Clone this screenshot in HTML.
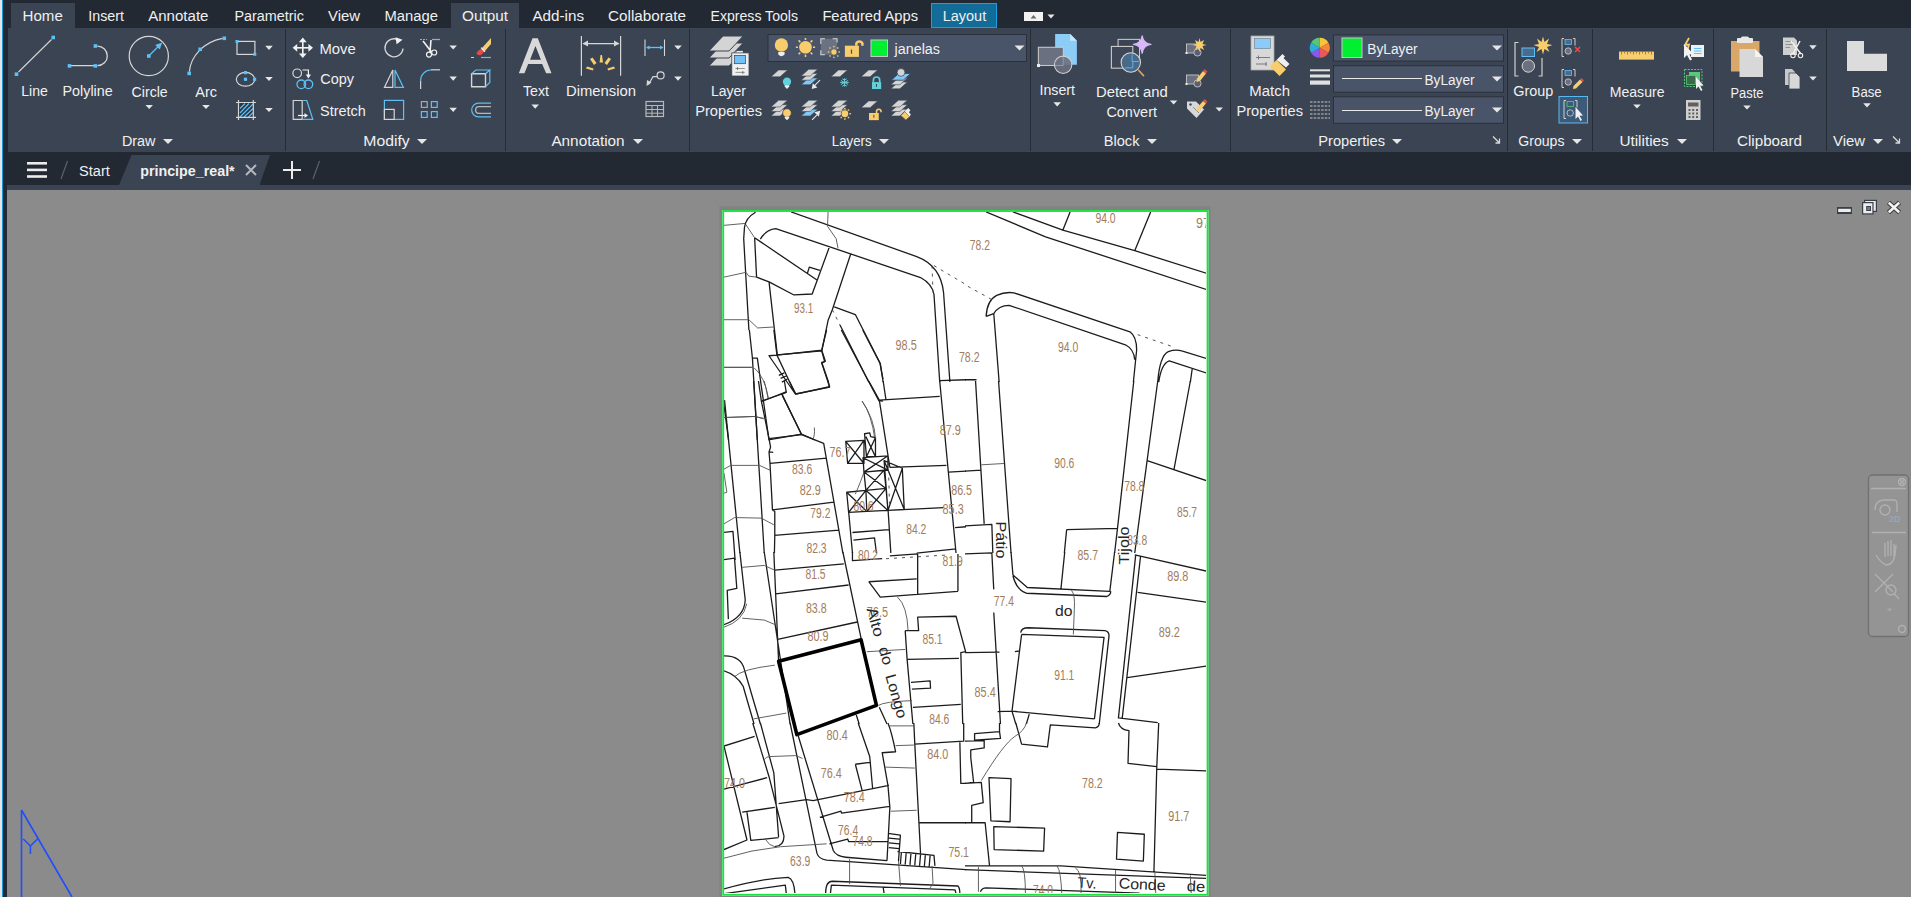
<!DOCTYPE html>
<html><head><meta charset="utf-8"><style>
html,body{margin:0;padding:0;width:1911px;height:897px;overflow:hidden;background:#222933;}
svg{position:absolute;left:0;top:0;display:block;font-family:"Liberation Sans",sans-serif;}
</style></head><body>
<svg width="1911" height="897" viewBox="0 0 1911 897">
<rect x="0" y="0" width="1911" height="897" fill="#222933"/>
<rect x="8" y="28" width="1903" height="124" fill="#3b4453"/>
<rect x="11" y="3" width="64" height="25" fill="#3b4453"/>
<rect x="451" y="3" width="68" height="25" fill="#3b4453"/>
<rect x="931.5" y="3.5" width="65" height="24" fill="#136b98" stroke="#18a0e0" stroke-width="1"/>
<rect x="285" y="29" width="1" height="122" fill="#262c36"/>
<rect x="505" y="29" width="1" height="122" fill="#262c36"/>
<rect x="689" y="29" width="1" height="122" fill="#262c36"/>
<rect x="1030" y="29" width="1" height="122" fill="#262c36"/>
<rect x="1230" y="29" width="1" height="122" fill="#262c36"/>
<rect x="1507" y="29" width="1" height="122" fill="#262c36"/>
<rect x="1592" y="29" width="1" height="122" fill="#262c36"/>
<rect x="1713" y="29" width="1" height="122" fill="#262c36"/>
<rect x="1826" y="29" width="1" height="122" fill="#262c36"/>
<rect x="7" y="185" width="1904" height="5" fill="#3b4453"/>
<rect x="7" y="190" width="1904" height="707" fill="#8b8b8b"/>
<rect x="0" y="0" width="2" height="897" fill="#e6e4e4"/>
<rect x="2" y="0" width="1" height="897" fill="#1597d6"/>
<rect x="3" y="0" width="1" height="897" fill="#2a2428"/>
<text x="22.6" y="21.3" font-size="15.5" font-weight="normal" fill="#f0f0f0" textLength="40.2" lengthAdjust="spacingAndGlyphs">Home</text>
<text x="88.3" y="21.3" font-size="15.5" font-weight="normal" fill="#f0f0f0" textLength="35.7" lengthAdjust="spacingAndGlyphs">Insert</text>
<text x="148.2" y="21.3" font-size="15.5" font-weight="normal" fill="#f0f0f0" textLength="60.3" lengthAdjust="spacingAndGlyphs">Annotate</text>
<text x="234.5" y="21.3" font-size="15.5" font-weight="normal" fill="#f0f0f0" textLength="69.5" lengthAdjust="spacingAndGlyphs">Parametric</text>
<text x="328.0" y="21.3" font-size="15.5" font-weight="normal" fill="#f0f0f0" textLength="32.0" lengthAdjust="spacingAndGlyphs">View</text>
<text x="384.5" y="21.3" font-size="15.5" font-weight="normal" fill="#f0f0f0" textLength="53.5" lengthAdjust="spacingAndGlyphs">Manage</text>
<text x="462.0" y="21.3" font-size="15.5" font-weight="normal" fill="#f0f0f0" textLength="46.0" lengthAdjust="spacingAndGlyphs">Output</text>
<text x="532.4" y="21.3" font-size="15.5" font-weight="normal" fill="#f0f0f0" textLength="51.6" lengthAdjust="spacingAndGlyphs">Add-ins</text>
<text x="608.0" y="21.3" font-size="15.5" font-weight="normal" fill="#f0f0f0" textLength="78.0" lengthAdjust="spacingAndGlyphs">Collaborate</text>
<text x="710.5" y="21.3" font-size="15.5" font-weight="normal" fill="#f0f0f0" textLength="87.5" lengthAdjust="spacingAndGlyphs">Express Tools</text>
<text x="822.4" y="21.3" font-size="15.5" font-weight="normal" fill="#f0f0f0" textLength="95.6" lengthAdjust="spacingAndGlyphs">Featured Apps</text>
<text x="942.7" y="21.3" font-size="15.5" font-weight="normal" fill="#f0f0f0" textLength="43.5" lengthAdjust="spacingAndGlyphs">Layout</text>
<rect x="1024" y="12" width="19" height="9" fill="#f2f2f2"/>
<path d="M1030.5 18.5 L1036.5 18.5 L1033.5 15 Z" fill="#6a6a6a"/>
<path d="M1047.5 14.5 L1054.5 14.5 L1051.0 18.5 Z" fill="#e6e6e6"/>
<text x="121.9" y="145.5" font-size="15.5" font-weight="normal" fill="#f0f0f0" textLength="33.6" lengthAdjust="spacingAndGlyphs">Draw</text>
<path d="M163.0 139.0 L173.0 139.0 L168.0 144.0 Z" fill="#e6e6e6"/>
<text x="363.3" y="145.5" font-size="15.5" font-weight="normal" fill="#f0f0f0" textLength="46.4" lengthAdjust="spacingAndGlyphs">Modify</text>
<path d="M417.0 139.0 L427.0 139.0 L422.0 144.0 Z" fill="#e6e6e6"/>
<text x="551.4" y="145.5" font-size="15.5" font-weight="normal" fill="#f0f0f0" textLength="73.2" lengthAdjust="spacingAndGlyphs">Annotation</text>
<path d="M633.0 139.0 L643.0 139.0 L638.0 144.0 Z" fill="#e6e6e6"/>
<text x="831.8" y="145.5" font-size="15.5" font-weight="normal" fill="#f0f0f0" textLength="39.9" lengthAdjust="spacingAndGlyphs">Layers</text>
<path d="M879.0 139.0 L889.0 139.0 L884.0 144.0 Z" fill="#e6e6e6"/>
<text x="1103.7" y="145.5" font-size="15.5" font-weight="normal" fill="#f0f0f0" textLength="35.8" lengthAdjust="spacingAndGlyphs">Block</text>
<path d="M1147.0 139.0 L1157.0 139.0 L1152.0 144.0 Z" fill="#e6e6e6"/>
<text x="1318.3" y="145.5" font-size="15.5" font-weight="normal" fill="#f0f0f0" textLength="66.7" lengthAdjust="spacingAndGlyphs">Properties</text>
<path d="M1392.0 139.0 L1402.0 139.0 L1397.0 144.0 Z" fill="#e6e6e6"/>
<text x="1518.3" y="145.5" font-size="15.5" font-weight="normal" fill="#f0f0f0" textLength="46.2" lengthAdjust="spacingAndGlyphs">Groups</text>
<path d="M1572.0 139.0 L1582.0 139.0 L1577.0 144.0 Z" fill="#e6e6e6"/>
<text x="1619.4" y="145.5" font-size="15.5" font-weight="normal" fill="#f0f0f0" textLength="49.4" lengthAdjust="spacingAndGlyphs">Utilities</text>
<path d="M1677.0 139.0 L1687.0 139.0 L1682.0 144.0 Z" fill="#e6e6e6"/>
<text x="1737.0" y="145.5" font-size="15.5" font-weight="normal" fill="#f0f0f0" textLength="65.0" lengthAdjust="spacingAndGlyphs">Clipboard</text>
<text x="1833.0" y="145.5" font-size="15.5" font-weight="normal" fill="#f0f0f0" textLength="32.0" lengthAdjust="spacingAndGlyphs">View</text>
<path d="M1873.0 139.0 L1883.0 139.0 L1878.0 144.0 Z" fill="#e6e6e6"/>
<path d="M1493.0 136.5 L1499.5 143 M1499.5 138.5 L1499.5 143 L1495.5 143" stroke="#d8d8d8" stroke-width="1.3" fill="none"/>
<path d="M1893.0 136.5 L1899.5 143 M1899.5 138.5 L1899.5 143 L1895.5 143" stroke="#d8d8d8" stroke-width="1.3" fill="none"/>
<text x="21.2" y="96.0" font-size="15.5" font-weight="normal" fill="#f0f0f0" textLength="26.6" lengthAdjust="spacingAndGlyphs">Line</text>
<text x="62.5" y="96.0" font-size="15.5" font-weight="normal" fill="#f0f0f0" textLength="50.2" lengthAdjust="spacingAndGlyphs">Polyline</text>
<text x="131.6" y="96.5" font-size="15.5" font-weight="normal" fill="#f0f0f0" textLength="36.1" lengthAdjust="spacingAndGlyphs">Circle</text>
<text x="195.3" y="96.5" font-size="15.5" font-weight="normal" fill="#f0f0f0" textLength="21.7" lengthAdjust="spacingAndGlyphs">Arc</text>
<text x="319.4" y="54.0" font-size="15.5" font-weight="normal" fill="#f0f0f0" textLength="36.3" lengthAdjust="spacingAndGlyphs">Move</text>
<text x="320.3" y="84.4" font-size="15.5" font-weight="normal" fill="#f0f0f0" textLength="33.7" lengthAdjust="spacingAndGlyphs">Copy</text>
<text x="320.0" y="116.0" font-size="15.5" font-weight="normal" fill="#f0f0f0" textLength="45.8" lengthAdjust="spacingAndGlyphs">Stretch</text>
<text x="523.0" y="96.4" font-size="15.5" font-weight="normal" fill="#f0f0f0" textLength="26.0" lengthAdjust="spacingAndGlyphs">Text</text>
<text x="566.0" y="95.7" font-size="15.5" font-weight="normal" fill="#f0f0f0" textLength="70.0" lengthAdjust="spacingAndGlyphs">Dimension</text>
<text x="711.0" y="96.0" font-size="15.5" font-weight="normal" fill="#f0f0f0" textLength="35.0" lengthAdjust="spacingAndGlyphs">Layer</text>
<text x="695.2" y="116.0" font-size="15.5" font-weight="normal" fill="#f0f0f0" textLength="66.8" lengthAdjust="spacingAndGlyphs">Properties</text>
<text x="1039.5" y="95.0" font-size="15.5" font-weight="normal" fill="#f0f0f0" textLength="35.5" lengthAdjust="spacingAndGlyphs">Insert</text>
<text x="1096.0" y="96.7" font-size="15.5" font-weight="normal" fill="#f0f0f0" textLength="71.8" lengthAdjust="spacingAndGlyphs">Detect and</text>
<text x="1106.4" y="116.6" font-size="15.5" font-weight="normal" fill="#f0f0f0" textLength="50.6" lengthAdjust="spacingAndGlyphs">Convert</text>
<text x="1249.3" y="95.6" font-size="15.5" font-weight="normal" fill="#f0f0f0" textLength="40.7" lengthAdjust="spacingAndGlyphs">Match</text>
<text x="1236.4" y="115.7" font-size="15.5" font-weight="normal" fill="#f0f0f0" textLength="66.6" lengthAdjust="spacingAndGlyphs">Properties</text>
<text x="1513.3" y="95.7" font-size="15.5" font-weight="normal" fill="#f0f0f0" textLength="40.0" lengthAdjust="spacingAndGlyphs">Group</text>
<text x="1609.7" y="96.8" font-size="15.5" font-weight="normal" fill="#f0f0f0" textLength="54.8" lengthAdjust="spacingAndGlyphs">Measure</text>
<text x="1730.5" y="97.8" font-size="15.5" font-weight="normal" fill="#f0f0f0" textLength="32.9" lengthAdjust="spacingAndGlyphs">Paste</text>
<text x="1851.6" y="96.8" font-size="15.5" font-weight="normal" fill="#f0f0f0" textLength="30.1" lengthAdjust="spacingAndGlyphs">Base</text>
<path d="M145.4 104.9 L152.9 104.9 L149.2 109.1 Z" fill="#e6e6e6"/>
<path d="M202.2 104.9 L209.8 104.9 L206.0 109.1 Z" fill="#e6e6e6"/>
<path d="M531.5 104.5 L539.0 104.5 L535.2 108.7 Z" fill="#e6e6e6"/>
<path d="M1053.5 102.3 L1061.0 102.3 L1057.2 106.5 Z" fill="#e6e6e6"/>
<path d="M1169.8 100.4 L1177.3 100.4 L1173.6 104.6 Z" fill="#e6e6e6"/>
<path d="M1633.2 104.4 L1640.8 104.4 L1637.0 108.6 Z" fill="#e6e6e6"/>
<path d="M1743.2 105.4 L1750.8 105.4 L1747.0 109.6 Z" fill="#e6e6e6"/>
<path d="M1863.2 103.3 L1870.8 103.3 L1867.0 107.5 Z" fill="#e6e6e6"/>
<path d="M265.2 45.7 L272.8 45.7 L269.0 49.9 Z" fill="#e6e6e6"/>
<path d="M265.2 76.9 L272.8 76.9 L269.0 81.1 Z" fill="#e6e6e6"/>
<path d="M265.2 107.9 L272.8 107.9 L269.0 112.1 Z" fill="#e6e6e6"/>
<path d="M449.4 45.4 L456.9 45.4 L453.2 49.6 Z" fill="#e6e6e6"/>
<path d="M449.4 76.5 L456.9 76.5 L453.2 80.7 Z" fill="#e6e6e6"/>
<path d="M449.4 107.7 L456.9 107.7 L453.2 111.9 Z" fill="#e6e6e6"/>
<path d="M674.2 45.4 L681.8 45.4 L678.0 49.6 Z" fill="#e6e6e6"/>
<path d="M674.2 76.5 L681.8 76.5 L678.0 80.7 Z" fill="#e6e6e6"/>
<path d="M1215.5 107.4 L1223.0 107.4 L1219.2 111.6 Z" fill="#e6e6e6"/>
<path d="M1809.2 45.2 L1816.7 45.2 L1812.9 49.4 Z" fill="#e6e6e6"/>
<path d="M1809.2 76.4 L1816.8 76.4 L1813.0 80.6 Z" fill="#e6e6e6"/>
<rect x="768" y="34.5" width="258.5" height="27" fill="#4a5468" stroke="#2b313b" stroke-width="1"/>
<rect x="871" y="40" width="16.5" height="16.5" fill="#00ef30" stroke="#c8c8c8" stroke-width="1"/>
<text x="894.5" y="53.8" font-size="15.5" font-weight="normal" fill="#f0f0f0" textLength="45.5" lengthAdjust="spacingAndGlyphs">janelas</text>
<path d="M1014.5 45.5 L1024.5 45.5 L1019.5 50.5 Z" fill="#e6e6e6"/>
<rect x="1333.5" y="34.9" width="170" height="26.2" fill="#4a5468" stroke="#2b313b" stroke-width="1"/>
<rect x="1333.5" y="65.7" width="170" height="26.5" fill="#4a5468" stroke="#2b313b" stroke-width="1"/>
<rect x="1333.5" y="96.8" width="170" height="26.5" fill="#4a5468" stroke="#2b313b" stroke-width="1"/>
<rect x="1342" y="38" width="20" height="19.5" fill="#00ef30" stroke="#c8c8c8" stroke-width="1"/>
<text x="1367.3" y="53.8" font-size="15.5" font-weight="normal" fill="#f0f0f0" textLength="50.4" lengthAdjust="spacingAndGlyphs">ByLayer</text>
<text x="1424.5" y="84.6" font-size="15.5" font-weight="normal" fill="#f0f0f0" textLength="50.1" lengthAdjust="spacingAndGlyphs">ByLayer</text>
<text x="1424.5" y="116.0" font-size="15.5" font-weight="normal" fill="#f0f0f0" textLength="50.1" lengthAdjust="spacingAndGlyphs">ByLayer</text>
<rect x="1342" y="78" width="80" height="1" fill="#e8e8e8"/>
<rect x="1342" y="110" width="80" height="1" fill="#e8e8e8"/>
<path d="M1492.0 45.5 L1502.0 45.5 L1497.0 50.5 Z" fill="#e6e6e6"/>
<path d="M1492.0 76.5 L1502.0 76.5 L1497.0 81.5 Z" fill="#e6e6e6"/>
<path d="M1492.0 107.5 L1502.0 107.5 L1497.0 112.5 Z" fill="#e6e6e6"/>
<rect x="1559" y="96.5" width="28.5" height="26.5" fill="#3d5a78" stroke="#5ab8f0" stroke-width="1"/>
<rect x="27" y="162" width="20" height="2.6" fill="#ececec"/>
<rect x="27" y="168.6" width="20" height="2.6" fill="#ececec"/>
<rect x="27" y="175.2" width="20" height="2.6" fill="#ececec"/>
<path d="M61 179 L67.5 161" stroke="#5a6270" stroke-width="1.2"/>
<text x="79.0" y="176.0" font-size="15.5" font-weight="normal" fill="#f0f0f0" textLength="30.8" lengthAdjust="spacingAndGlyphs">Start</text>
<path d="M119 185 L131.5 155 L270 155 L259.5 185 Z" fill="#3b4453"/>
<text x="140.2" y="176.0" font-size="15.5" font-weight="bold" fill="#f0f0f0" textLength="94.5" lengthAdjust="spacingAndGlyphs">principe_real*</text>
<path d="M246 165 L256 175 M256 165 L246 175" stroke="#b4b8be" stroke-width="2"/>
<path d="M283 170 L301 170 M292 161 L292 179" stroke="#ececec" stroke-width="2"/>
<path d="M313 179 L319.5 161" stroke="#5a6270" stroke-width="1.2"/>
<path d="M18.5 72 L51.5 39.5" stroke="#d6d6d6" stroke-width="1.1"/>
<rect x="14.70" y="72.40" width="3.6" height="3.6" fill="#5ec0f5"/><rect x="51.40" y="35.70" width="3.6" height="3.6" fill="#5ec0f5"/>
<path d="M71 65.7 L94 65.7 M97.5 65.7 A9.8 9.8 0 0 0 97.5 46.1" stroke="#d6d6d6" stroke-width="1.3" fill="none"/>
<rect x="67.70" y="64.10" width="3.6" height="3.6" fill="#5ec0f5"/><rect x="93.60" y="64.10" width="3.6" height="3.6" fill="#5ec0f5"/><rect x="93.60" y="44.20" width="3.6" height="3.6" fill="#5ec0f5"/>
<circle cx="148.8" cy="56" r="19.6" stroke="#d6d6d6" stroke-width="1.2" fill="none"/>
<rect x="147.00" y="54.20" width="3.6" height="3.6" fill="#5ec0f5"/><path d="M149.5 55.3 L158.5 46.3" stroke="#5ec0f5" stroke-width="1.3"/><path d="M162.2 42.6 L155.2 45 L159.8 49.6 Z" fill="#5ec0f5"/>
<path d="M189.4 71.6 C190.5 57 203 42 222.5 38.4" stroke="#d6d6d6" stroke-width="1.2" fill="none"/>
<rect x="187.40" y="71.60" width="3.6" height="3.6" fill="#5ec0f5"/><rect x="198.40" y="47.50" width="3.6" height="3.6" fill="#5ec0f5"/><rect x="222.50" y="36.50" width="3.6" height="3.6" fill="#5ec0f5"/>
<rect x="237" y="41.4" width="17.9" height="13" stroke="#d6d6d6" stroke-width="1.2" fill="none"/><rect x="235.50" y="40.00" width="3" height="3" fill="#5ec0f5"/><rect x="253.30" y="52.80" width="3" height="3" fill="#5ec0f5"/>
<ellipse cx="245.5" cy="79.3" rx="9.2" ry="6.9" stroke="#d6d6d6" stroke-width="1.2" fill="none"/><rect x="243.90" y="77.70" width="3.2" height="3.2" fill="#5ec0f5"/><rect x="243.90" y="71.00" width="3.2" height="3.2" fill="#5ec0f5"/><rect x="253.00" y="77.70" width="3.2" height="3.2" fill="#5ec0f5"/>
<rect x="238.5" y="102.5" width="14.8" height="14.8" fill="#2e3440"/><path d="M240 113 L249 103.5 M240 117 L253 104 M244 117 L253 108.5 M248.5 117 L253 112.5 M240 108.5 L245 103.5" stroke="#5ec0f5" stroke-width="1.2"/><path d="M236 102.5 L256 102.5 M236 117.3 L256 117.3 M238.5 100 L238.5 120 M253.3 100 L253.3 120" stroke="#d6d6d6" stroke-width="1.2"/>
<g fill="#f2f2f2"><rect x="302" y="41" width="1.6" height="14"/><rect x="296" y="47" width="14" height="1.6"/><path d="M302.8 37.6 L298.9 42.2 L306.7 42.2 Z M302.8 58 L298.9 53.4 L306.7 53.4 Z M292.6 47.8 L297.2 43.9 L297.2 51.7 Z M313 47.8 L308.4 43.9 L308.4 51.7 Z"/></g>
<path d="M398.2 39.8 A9 9 0 1 0 403 48.5" stroke="#d6d6d6" stroke-width="1.3" fill="none"/><path d="M395.5 37.2 L402.5 39.8 L396.6 44.2 Z" fill="#f2f2f2"/>
<path d="M420 39.5 L427 39.5" stroke="#5ec0f5" stroke-width="1.2" stroke-dasharray="2 1"/><path d="M432 39.5 L440 39.5" stroke="#a8a8a8" stroke-width="1.3"/><path d="M423 41 L431.5 52 M431 40 L430 52" stroke="#f2f2f2" stroke-width="1.6" fill="none"/><circle cx="429" cy="54.6" r="2.5" stroke="#f2f2f2" stroke-width="1.2" fill="none"/><circle cx="434.2" cy="52.5" r="2.5" stroke="#f2f2f2" stroke-width="1.2" fill="none"/>
<path d="M482 48 L491 38 L491 44 L484.5 51.5 Z" fill="#f7cd6e"/><path d="M478 51 L482 48 L484.5 51.5 L481 55 Q477 56 476.5 53 Z" fill="#e84a4a"/><path d="M481.2 47.6 L485 51.8" stroke="#f0f0f0" stroke-width="1.4"/><path d="M471 57.5 L474 57.5" stroke="#d6d6d6" stroke-width="1"/><path d="M481 57.5 L491 57.5" stroke="#5ec0f5" stroke-width="1.2"/>
<circle cx="297.2" cy="73.3" r="4.3" stroke="#d6d6d6" stroke-width="1.2" fill="none"/><path d="M302.5 70 L308.4 70 L308.4 75" stroke="#f2f2f2" stroke-width="1.2" fill="none"/><path d="M305.8 74.5 L311 74.5 L308.4 78.5 Z" fill="#f2f2f2"/><circle cx="301.3" cy="84.3" r="4.3" stroke="#5ec0f5" stroke-width="1.3" fill="none"/><circle cx="308.4" cy="84.3" r="4.3" stroke="#5ec0f5" stroke-width="1.3" fill="none"/>
<path d="M384.4 87.4 L392.8 70 L392.8 87.4 Z" stroke="#d6d6d6" stroke-width="1.2" fill="none"/><path d="M395 87.4 L395 70 L403.4 87.4 Z" stroke="#5ec0f5" stroke-width="1.2" fill="none"/>
<path d="M420.6 89 L420.6 80.5" stroke="#d6d6d6" stroke-width="1.2"/><path d="M420.6 80.5 A10.5 10.5 0 0 1 431 70" stroke="#5ec0f5" stroke-width="1.2" fill="none"/><path d="M431 69.8 L440 69.8" stroke="#d6d6d6" stroke-width="1.2"/>
<path d="M471.6 73.7 L485.5 73.7 L485.5 86.7 L471.6 86.7 Z" stroke="#d6d6d6" stroke-width="1.4" fill="none"/><path d="M471.6 73.7 L475.8 70 L489.8 70 L485.5 73.7 M489.8 70 L489.8 82.4 L485.5 86.7" stroke="#5ec0f5" stroke-width="1.2" fill="none"/>
<path d="M293.2 100.5 L302.2 100.5 L302.2 119.4 L293.2 119.4 Z" stroke="#d6d6d6" stroke-width="1.2" fill="none"/><path d="M302.5 100.5 L306.8 100.5 L312.8 119.4 L302.5 119.4" stroke="#5ec0f5" stroke-width="1.2" fill="none"/><path d="M298 115.5 L305 115.5" stroke="#f2f2f2" stroke-width="1.2"/><path d="M304.5 113 L308 115.5 L304.5 118 Z" fill="#f2f2f2"/>
<rect x="384.4" y="100.4" width="19.2" height="19" stroke="#5ec0f5" stroke-width="1.2" fill="none"/><rect x="384.4" y="109.4" width="9.8" height="10" stroke="#d6d6d6" stroke-width="1.2" fill="#3b4453"/>
<g stroke-width="1.2" fill="none"><rect x="421.4" y="101.6" width="5.8" height="5.8" stroke="#a8a8a8"/><rect x="431.4" y="101.6" width="5.8" height="5.8" stroke="#5ec0f5"/><rect x="421.4" y="111.6" width="5.8" height="5.8" stroke="#5ec0f5"/><rect x="431.4" y="111.6" width="5.8" height="5.8" stroke="#5ec0f5"/></g>
<path d="M491 103.2 L478.5 103.2 A6.8 6.8 0 0 0 478.5 116.8 L491 116.8" stroke="#5ec0f5" stroke-width="1.2" fill="none"/><path d="M491 106.6 L479 106.6 A3.4 3.4 0 0 0 479 113.4 L491 113.4" stroke="#b8b8b8" stroke-width="1.3" fill="none"/>
<path transform="translate(510,32) scale(0.053533)" fill-rule="evenodd" fill="#d8d8d8" d="M165 770 L420 115 L520 115 L775 770 L675 770 L600 600 L340 600 L270 770 Z M375 520 L475 260 L578 520 Z"/>
<path d="M581.4 36 L581.4 75.8 M620.6 36 L620.6 75.8 M583 43.6 L619 43.6" stroke="#d6d6d6" stroke-width="1.2"/><path d="M582.5 43.6 L588 40.6 L588 46.6 Z M619.5 43.6 L614 40.6 L614 46.6 Z" fill="#d6d6d6"/><g fill="#f7cd6e"><path d="M600.5 55 L602 55 L603 62.5 L599.6 62.5 Z"/><path d="M590 59 L592.5 57.5 L596.5 63 L594 65 Z"/><path d="M611 59 L608.5 57.5 L604.5 63 L607 65 Z"/><path d="M586 68.5 L587 66.5 L593.5 68.5 L593 70.5 Z"/><path d="M615 68.5 L614 66.5 L607.5 68.5 L608 70.5 Z"/></g>
<path d="M645 39.5 L645 56 M664.5 39.5 L664.5 56" stroke="#d6d6d6" stroke-width="1.1"/><path d="M647 47.5 L662.5 47.5" stroke="#5ec0f5" stroke-width="1.3"/><path d="M646 47.5 L649.5 45.5 L649.5 49.5 Z M663.5 47.5 L660 45.5 L660 49.5 Z" fill="#5ec0f5"/>
<circle cx="660.6" cy="75.4" r="3.5" stroke="#d6d6d6" stroke-width="1.2" fill="none"/><path d="M657.3 76.6 L653 76.6 L648.5 84.5" stroke="#d6d6d6" stroke-width="1.2" fill="none"/><path d="M646.5 86 L647 80 L651.5 82.5 Z" fill="#d6d6d6"/>
<rect x="646" y="101.5" width="17.5" height="15" stroke="#b8b8b8" stroke-width="1.2" fill="none"/><path d="M646 105.5 L663.5 105.5 M646 109.5 L663.5 109.5 M646 113.2 L663.5 113.2 M652 105.5 L652 116.5 M657.5 105.5 L657.5 116.5" stroke="#b8b8b8" stroke-width="1"/>
<path d="M708.9 66 L723.1 51 L743.2 51 L729.0 66 Z" fill="#d4d4d4" stroke="#3b4453" stroke-width="1.0"/><path d="M708.9 58 L723.1 43 L743.2 43 L729.0 58 Z" fill="#d4d4d4" stroke="#3b4453" stroke-width="1.0"/><path d="M708.9 51 L723.1 36 L743.2 36 L729.0 51 Z" fill="#d4d4d4" stroke="#3b4453" stroke-width="1.0"/>
<rect x="736.8" y="50.9" width="6.1" height="2.5" fill="#ececec"/><rect x="731.8" y="52.9" width="17.2" height="23.1" fill="#f0f0f0" stroke="#3b4453" stroke-width="0.8"/><rect x="734.3" y="55.4" width="11.1" height="8.3" fill="#72c2f8" stroke="#3a4050" stroke-width="0.7"/><path d="M735.5 68.5 L744.8 68.5 M735.5 72.4 L744.8 72.4" stroke="#8a8a8a" stroke-width="0.9"/><path d="M737.5 67.3 L737.5 69.8 M742.8 71.2 L742.8 73.7" stroke="#6a6a6a" stroke-width="1.1"/>
<g transform="translate(766,32) scale(0.07013)"><circle cx="220" cy="185" r="95" fill="#f7cd6e"/><path d="M175 285 L265 285 L265 320 Q220 370 175 320 Z" fill="#eeeeee"/><circle cx="563" cy="218" r="90" fill="#f7cd6e"/><path d="M563 85 L563 115 M563 322 L563 355 M425 218 L455 218 M670 218 L700 218 M465 120 L490 145 M636 292 L661 317 M661 120 L636 145 M490 292 L465 317" stroke="#f7cd6e" stroke-width="22"/><rect x="782" y="97" width="231" height="226" fill="#6b7383"/><path d="M782 170 L782 97 L840 97 M950 97 L1013 97 L1013 150 M782 260 L782 323 L840 323" stroke="#d8d8d8" stroke-width="15" fill="none"/><circle cx="968" cy="285" r="45" fill="#f7cd6e" stroke="#4b5569" stroke-width="10"/><g fill="#f7cd6e"><rect x="958" y="198" width="20" height="20"/><rect x="958" y="352" width="20" height="20"/><rect x="883" y="275" width="20" height="20"/><rect x="1033" y="275" width="20" height="20"/><rect x="903" y="218" width="20" height="20"/><rect x="1013" y="218" width="20" height="20"/><rect x="903" y="332" width="20" height="20"/><rect x="1013" y="332" width="20" height="20"/></g><rect x="1125" y="195" width="200" height="160" fill="#f7cd6e"/><path d="M1288 195 L1288 165 A47 47 0 0 1 1375 165 L1375 195" stroke="#f7cd6e" stroke-width="35" fill="none"/><rect x="1210" y="250" width="18" height="60" fill="#5a5040"/></g>
<g transform="translate(768,64) scale(0.07536)"><path d="M40 170 L140 80 L260 80 L160 170 Z" fill="#d4d4d4" stroke="#3b4453" stroke-width="8"/><circle cx="252" cy="235" r="55" fill="#62d0d8"/><path d="M222 282 L282 282 L282 300 L252 332 L222 300 Z" fill="#eeeeee"/><path d="M440 275 L540 185 L660 185 L560 275 Z" fill="#80c8f8" stroke="#3b4453" stroke-width="8"/><path d="M440 215 L540 125 L660 125 L560 215 Z" fill="#d4d4d4" stroke="#3b4453" stroke-width="8"/><path d="M440 160 L540 70 L660 70 L560 160 Z" fill="#d4d4d4" stroke="#3b4453" stroke-width="8"/><path d="M690 215 L615 290" stroke="#e8e8e8" stroke-width="14"/><path d="M580 332 L595 255 L655 312 Z" fill="#e8e8e8"/><path d="M835 170 L935 80 L1055 80 L955 170 Z" fill="#d4d4d4" stroke="#3b4453" stroke-width="8"/><g stroke="#62d0d8" stroke-width="13" fill="none"><path d="M1015 190 L1015 300 M967 218 L1063 272 M967 272 L1063 218"/><path d="M985 195 L1015 215 L1045 195 M985 295 L1015 275 L1045 295 M958 245 L1072 245"/></g><path d="M1235 170 L1335 80 L1455 80 L1355 170 Z" fill="#d4d4d4" stroke="#3b4453" stroke-width="8"/><rect x="1380" y="240" width="122" height="92" fill="#62d0d8"/><path d="M1398 240 L1398 215 A42 42 0 0 1 1482 215 L1482 240" stroke="#62d0d8" stroke-width="22" fill="none"/><rect x="1432" y="265" width="14" height="38" fill="#2a4a50"/><path d="M1630 330 L1730 240 L1850 240 L1750 330 Z" fill="#d4d4d4" stroke="#3b4453" stroke-width="8"/><path d="M1630 275 L1730 185 L1850 185 L1750 275 Z" fill="#d4d4d4" stroke="#3b4453" stroke-width="8"/><path d="M1635 215 L1735 125 L1895 125 L1795 215 Z" fill="#80c8f8" stroke="#3b4453" stroke-width="12"/><circle cx="1765" cy="112" r="52" fill="#d4d4d4" stroke="#3b4453" stroke-width="10"/><path d="M40 690 L140 600 L260 600 L160 690 Z" fill="#d4d4d4" stroke="#3b4453" stroke-width="8"/><path d="M40 630 L140 540 L260 540 L160 630 Z" fill="#d4d4d4" stroke="#3b4453" stroke-width="8"/><path d="M40 570 L140 480 L260 480 L160 570 Z" fill="#d4d4d4" stroke="#3b4453" stroke-width="8"/><circle cx="252" cy="650" r="57" fill="#f7cd6e" stroke="#3b4453" stroke-width="10"/><path d="M222 700 L282 700 L282 715 L252 745 L222 715 Z" fill="#eeeeee"/><path d="M440 690 L540 600 L660 600 L560 690 Z" fill="#80c8f8" stroke="#3b4453" stroke-width="8"/><path d="M440 630 L540 540 L660 540 L560 630 Z" fill="#d4d4d4" stroke="#3b4453" stroke-width="8"/><path d="M440 570 L540 480 L660 480 L560 570 Z" fill="#d4d4d4" stroke="#3b4453" stroke-width="8"/><path d="M585 740 L650 675" stroke="#e8e8e8" stroke-width="14"/><path d="M692 622 L615 640 L675 700 Z" fill="#e8e8e8"/><path d="M835 690 L935 600 L1055 600 L955 690 Z" fill="#d4d4d4" stroke="#3b4453" stroke-width="8"/><path d="M835 630 L935 540 L1055 540 L955 630 Z" fill="#d4d4d4" stroke="#3b4453" stroke-width="8"/><path d="M835 570 L935 480 L1055 480 L955 570 Z" fill="#d4d4d4" stroke="#3b4453" stroke-width="8"/><circle cx="1020" cy="660" r="55" fill="#3b4453"/><circle cx="1020" cy="660" r="45" fill="#f7cd6e"/><g fill="#f7cd6e"><rect x="1010" y="582" width="20" height="20"/><rect x="1010" y="720" width="20" height="20"/><rect x="942" y="650" width="20" height="20"/><rect x="1080" y="650" width="20" height="20"/><rect x="962" y="602" width="20" height="20"/><rect x="1058" y="602" width="20" height="20"/><rect x="962" y="700" width="20" height="20"/><rect x="1058" y="700" width="20" height="20"/></g><path d="M1235 580 L1335 490 L1455 490 L1355 580 Z" fill="#d4d4d4" stroke="#3b4453" stroke-width="8"/><rect x="1340" y="650" width="130" height="95" fill="#f7cd6e"/><path d="M1440 650 L1440 630 A30 30 0 0 1 1500 630 L1500 640" stroke="#f7cd6e" stroke-width="20" fill="none"/><rect x="1398" y="675" width="14" height="38" fill="#5a5040"/><path d="M1630 690 L1730 600 L1850 600 L1750 690 Z" fill="#d4d4d4" stroke="#3b4453" stroke-width="8"/><path d="M1630 630 L1730 540 L1850 540 L1750 630 Z" fill="#d4d4d4" stroke="#3b4453" stroke-width="8"/><path d="M1630 570 L1730 480 L1850 480 L1750 570 Z" fill="#d4d4d4" stroke="#3b4453" stroke-width="8"/><path d="M1760 685 L1815 630 L1880 700 L1830 745 Z" fill="#f7cd6e" stroke="#3b4453" stroke-width="10"/><path d="M1815 630 L1860 585 L1890 615 L1870 640 L1895 668 L1880 700 Z" fill="#eeeeee"/></g>
<g transform="translate(1032,30) scale(0.06698)"><path d="M345 60 L570 60 L670 160 L670 520 L345 520 Z" fill="#8ccdf8"/><path d="M570 60 L670 160 L570 160 Z" fill="#c8e8ff"/><rect x="95" y="258" width="375" height="272" fill="#6b7080" stroke="#c8c8c8" stroke-width="16"/><circle cx="465" cy="520" r="130" fill="#6b7080" fill-opacity="0.9" stroke="#d0d0d0" stroke-width="16"/><path d="M95 530 L465 530 L465 258" stroke="#c8c8c8" stroke-width="10" fill="none" opacity="0.6"/><rect x="75" y="508" width="45" height="45" fill="#eeeeee"/><rect x="1285" y="140" width="320" height="300" fill="none" stroke="#c8c8c8" stroke-width="16"/><rect x="1185" y="245" width="320" height="325" fill="#404756" stroke="#d0d0d0" stroke-width="16"/><circle cx="1475" cy="485" r="145" fill="#4a6a8a" stroke="#d8d8d8" stroke-width="16"/><path d="M1495 365 L1495 470 L1595 470 M1385 565 L1505 565 L1505 470" stroke="#5ab8f0" stroke-width="14" fill="none"/><path d="M1595 605 L1665 680" stroke="#e0a050" stroke-width="26" stroke-linecap="round"/><path d="M1645 90 Q1660 200 1775 215 Q1660 230 1645 345 Q1630 230 1515 215 Q1630 200 1645 90 Z" fill="#d8b8f8" stroke="#d8b8f8" stroke-width="20" stroke-linejoin="round"/></g>
<rect x="1186.5" y="44" width="12" height="9" fill="#6a7080" stroke="#c4c4c4" stroke-width="0.9"/><circle cx="1197.5" cy="52.5" r="3.6" fill="#5a6070" stroke="#c4c4c4" stroke-width="0.9"/><rect x="1185.5" y="52" width="2" height="2" fill="#f0f0f0"/><path d="M1199.5 38 L1200.5 42 L1204 40 L1202.5 44 L1206.5 45 L1202.5 46 L1204 50 L1200.5 48 L1199.5 52 L1198.5 48 L1195 50 L1196.5 46 L1192.5 45 L1196.5 44 L1195 40 L1198.5 42 Z" fill="#f7cd6e"/>
<rect x="1186.5" y="75" width="12" height="9" fill="#6a7080" stroke="#c4c4c4" stroke-width="0.9"/><circle cx="1197.5" cy="83.5" r="3.6" fill="#5a6070" stroke="#c4c4c4" stroke-width="0.9"/><rect x="1185.5" y="83" width="2" height="2" fill="#f0f0f0"/><path d="M1197 78.5 L1203 71 L1206 73.5 L1200 81 L1196.5 82 Z" fill="#f7cd6e"/><path d="M1203 71 L1204.5 69 L1207.5 71.5 L1206 73.5 Z" fill="#e84a4a"/>
<path d="M1187 101.5 L1196 101.5 L1204 109.5 L1196.5 118 L1187 108.5 Z" fill="#d8d8d8"/><circle cx="1190.5" cy="104.5" r="1.2" fill="#3b4453"/><path d="M1193 107 L1199 113" stroke="#7a7a7a" stroke-width="0.8"/><path d="M1197 108 L1203 101 L1206 103.5 L1200 110.5 L1196.5 111 Z" fill="#f7cd6e"/><path d="M1203 101 L1204.5 99 L1207.5 101.5 L1206 103.5 Z" fill="#e84a4a"/>
<rect x="1251" y="36" width="23" height="34" fill="#d8d8d8" stroke="#a8a8a8" stroke-width="0.8"/><rect x="1254.5" y="38.5" width="16" height="10" fill="#8ccaf8" stroke="#6a7a8a" stroke-width="0.6"/><path d="M1256 57.5 L1270 57.5 M1256 64 L1267 64 M1258.5 55.5 L1258.5 59.5 M1266 62 L1266 66" stroke="#707070" stroke-width="0.9"/><path d="M1270 66.5 L1276.5 60 L1286 69.5 L1279.5 76 Z" fill="#f7cd6e"/><path d="M1276.5 60 L1282.5 54 L1285 56.5 L1283.5 58 L1289.5 64 L1286 67.5 Z" fill="#f0f0f0"/>
<path d="M1319.8 47.8 L1319.80 37.80 A10 10 0 0 1 1328.46 42.80 Z" fill="#f7c33a"/>
<path d="M1319.8 47.8 L1328.46 42.80 A10 10 0 0 1 1328.46 52.80 Z" fill="#f7853a"/>
<path d="M1319.8 47.8 L1328.46 52.80 A10 10 0 0 1 1319.80 57.80 Z" fill="#e85a5a"/>
<path d="M1319.8 47.8 L1319.80 57.80 A10 10 0 0 1 1311.14 52.80 Z" fill="#8a55f0"/>
<path d="M1319.8 47.8 L1311.14 52.80 A10 10 0 0 1 1311.14 42.80 Z" fill="#2ab0d8"/>
<path d="M1319.8 47.8 L1311.14 42.80 A10 10 0 0 1 1319.80 37.80 Z" fill="#58c47a"/>
<rect x="1310" y="69.3" width="20" height="2" fill="#e0e0e0"/><rect x="1310" y="74.5" width="20" height="3" fill="#e0e0e0"/><rect x="1310" y="80.5" width="20" height="4.2" fill="#e0e0e0"/>
<path d="M1310 102 L1330 102 M1310 106 L1330 106 M1310 110 L1330 110 M1310 114 L1330 114 M1310 118 L1330 118" stroke="#c8c8c8" stroke-width="1" stroke-dasharray="2.5 1.2"/>
<path d="M1518.5 42.5 L1515 42.5 L1515 76 L1518.5 76 M1538.5 76 L1542 76 L1542 58" stroke="#d0d0d0" stroke-width="1.2" fill="none"/><rect x="1522" y="48" width="12.5" height="8.5" fill="#4a6a8e" stroke="#5ec0f5" stroke-width="1"/><circle cx="1528.3" cy="66" r="6.2" fill="#6a7080" stroke="#d8d8d8" stroke-width="1"/><path d="M1543 36.5 L1544.5 42 L1549 38.5 L1547 44 L1552.5 45 L1547 47 L1549.5 52 L1544.5 49 L1543 54.5 L1541.5 49 L1536.5 52 L1539 47 L1533.5 45 L1539 44 L1537 38.5 L1541.5 42 Z" fill="#f7cd6e"/>
<path d="M1564 38.5 L1562 38.5 L1562 56.5 L1564 56.5 M1573 38.5 L1575 38.5 L1575 45.5" stroke="#d0d0d0" stroke-width="1" fill="none"/><rect x="1565" y="39.5" width="6.5" height="5" fill="#4a6a8e" stroke="#5ec0f5" stroke-width="0.8"/><circle cx="1568.2" cy="51.0" r="3.2" fill="#6a7080" stroke="#d0d0d0" stroke-width="0.8"/><path d="M1575 47 L1580 52 M1580 47 L1575 52" stroke="#e84a4a" stroke-width="1.6"/>
<path d="M1564 69.5 L1562 69.5 L1562 87.5 L1564 87.5 M1573 69.5 L1575 69.5 L1575 76.5" stroke="#d0d0d0" stroke-width="1" fill="none"/><rect x="1565" y="70.5" width="6.5" height="5" fill="#4a6a8e" stroke="#5ec0f5" stroke-width="0.8"/><circle cx="1568.2" cy="82.0" r="3.2" fill="#6a7080" stroke="#d0d0d0" stroke-width="0.8"/><path d="M1573.5 86 L1580 79.5 L1582.5 82 L1576 88.5 L1573 89 Z" fill="#f7cd6e"/><path d="M1580 79.5 L1581.5 78 L1584 80.5 L1582.5 82 Z" fill="#e84a4a"/>
<path d="M1566 100.5 L1564 100.5 L1564 118.5 L1566 118.5 M1575 100.5 L1577 100.5 L1577 107.5" stroke="#d0d0d0" stroke-width="1" fill="none"/><rect x="1567" y="101.5" width="6.5" height="5" fill="#3d5a78" stroke="#5ac87a" stroke-width="0.8"/><circle cx="1570.2" cy="113.0" r="3.2" fill="#3d5a78" stroke="#d0d0d0" stroke-width="0.8"/><path d="M1575.5 107 L1575.5 119 L1578 116.5 L1580.5 121 L1582 120 L1579.5 115.8 L1583 115.5 Z" fill="#f2f2f2"/>
<rect x="1619" y="51.6" width="35" height="8" fill="#f7cd6e"/><path d="M1621.5 51.6 L1621.5 54.5 M1624.5 51.6 L1624.5 53.5 M1627.5 51.6 L1627.5 54.5 M1630.5 51.6 L1630.5 53.5 M1633.5 51.6 L1633.5 54.5 M1636.5 51.6 L1636.5 53.5 M1639.5 51.6 L1639.5 54.5 M1642.5 51.6 L1642.5 53.5 M1645.5 51.6 L1645.5 54.5 M1648.5 51.6 L1648.5 53.5 M1651.5 51.6 L1651.5 54.5" stroke="#8a7040" stroke-width="0.8"/>
<rect x="1691" y="45" width="13" height="12" fill="#f0f0f0"/><path d="M1694 48.5 L1701.5 48.5 M1694 51 L1701.5 51 M1694 53.5 L1701.5 53.5" stroke="#5ec0f5" stroke-width="1.1"/><path d="M1689 38 L1685 45 L1689 44.5 L1687.5 50" stroke="#f7cd6e" stroke-width="1.8" fill="none"/><path d="M1684 44 L1684 58 L1687 55 L1690 60.5 L1692 59.5 L1689.5 54.5 L1693.5 54 Z" fill="#f2f2f2"/>
<rect x="1684.5" y="69.5" width="17.5" height="17" fill="none" stroke="#5ac87a" stroke-width="1" stroke-dasharray="2 1.2"/><rect x="1689" y="72" width="11" height="11" fill="#5ac87a"/><rect x="1686.5" y="75.5" width="9" height="9" fill="#3b6a4a" stroke="#5ac87a" stroke-width="0.8"/><path d="M1696 77 L1696 89 L1698.5 86.5 L1701 91 L1702.5 90 L1700 85.8 L1703.5 85.5 Z" fill="#f2f2f2"/>
<rect x="1686" y="100" width="14.5" height="20" fill="#d0d0d0"/><rect x="1688" y="102.5" width="10.5" height="4" fill="#606060"/><path d="M1688.5 110 L1690.5 110 M1692.2 110 L1694.2 110 M1696 110 L1698 110 M1688.5 113.5 L1690.5 113.5 M1692.2 113.5 L1694.2 113.5 M1696 113.5 L1698 113.5 M1688.5 117 L1690.5 117 M1692.2 117 L1694.2 117 M1696 117 L1698 117" stroke="#606060" stroke-width="2"/>
<rect x="1731" y="41" width="28.5" height="30.5" fill="#d9a868"/><rect x="1737" y="38" width="16" height="5" rx="1" fill="#e8e8e8"/><rect x="1741" y="36.5" width="8" height="3" rx="1.5" fill="#e8e8e8"/><path d="M1739.5 49 L1755 49 L1763 57 L1763 77 L1739.5 77 Z" fill="#d8d8d8"/><path d="M1755 49 L1763 57 L1755 57 Z" fill="#f4f4f4"/>
<path d="M1783 37.5 L1794 37.5 L1797 40.5 L1797 55 L1783 55 Z" fill="#cfcfcf"/><path d="M1785.5 41.5 L1793 41.5 M1785.5 44.5 L1793 44.5 M1785.5 47.5 L1790 47.5" stroke="#8a8a8a" stroke-width="0.9"/><path d="M1791 41 L1801 54 M1800 41 L1793 54" stroke="#f2f2f2" stroke-width="1.5"/><circle cx="1793" cy="55.5" r="2.2" fill="none" stroke="#f2f2f2" stroke-width="1.1"/><circle cx="1800.5" cy="55.5" r="2.2" fill="none" stroke="#f2f2f2" stroke-width="1.1"/>
<path d="M1785 69 L1792 69 L1795 72 L1795 85 L1785 85 Z" fill="#c8c8c8"/><path d="M1789 73 L1796 73 L1800 77 L1800 89 L1789 89 Z" fill="#d8d8d8" stroke="#3b4453" stroke-width="0.8"/>
<path d="M1847 41 L1864 41 L1864 53.8 L1887 53.8 L1887 71 L1847 71 Z" fill="#dcdcdc"/>
<rect x="719" y="206" width="492" height="692" fill="#858585"/>
<rect x="720.5" y="207.5" width="489" height="689" fill="#828282"/>
<rect x="722" y="210" width="486.5" height="686" fill="#ffffff"/>
<defs><clipPath id="pc"><rect x="724" y="212" width="482" height="681"/></clipPath></defs><g clip-path="url(#pc)"><g transform="translate(723,210) scale(0.191791)" fill="none" stroke-linejoin="round"><path d="M355 10 L1010 243 Q1135 290 1150 430 L1183 897 M195 152 Q225 100 275 97 L1030 352 Q1090 385 1100 440 L1130 897 M170 12 Q120 40 112 90 L108 150 L135 626 M165 145 L175 350 L240 375 L370 443 L465 438 L555 192 M165 145 L490 365 M440 330 L450 298 L505 315 M665 232 L570 520 L548 575 L515 735 L283 755 M240 375 L283 755 M515 735 L530 790 L515 795 L550 897 M580 505 L690 545 L820 800 L835 897 M610 600 L760 897 M1130 890 L1267 885" stroke="#1c1c1c" stroke-width="1.3" vector-effect="non-scaling-stroke"/><path d="M5 80 L115 70 L165 145 M5 350 L120 325 L135 345 L175 350 M5 572 L135 572 L180 615 L265 610 M548 10 L545 85 L590 150 L600 200 M5 820 L150 820" stroke="#505050" stroke-width="0.9" vector-effect="non-scaling-stroke"/><path d="M570 520 L610 600 M1090 290 L1095 430 M1100 290 L1260 385" stroke="#404040" stroke-width="0.9" stroke-dasharray="3 5" vector-effect="non-scaling-stroke"/></g>
<g transform="translate(965,210) scale(0.191791)" fill="none" stroke-linejoin="round"><path d="M110 10 L420 140 L1260 415 M250 10 L510 105 L885 212 L1260 330 M548 10 L510 105 M968 10 L885 212 M110 555 Q115 470 165 445 Q210 425 255 432 L860 635 Q895 660 895 730 L878 897 M150 540 Q175 498 230 497 L840 705 Q880 725 885 780 M110 555 L150 540 M150 540 L178 897 M1005 897 Q1015 760 1060 738 Q1100 725 1130 735 L1260 775 M1010 897 Q1025 800 1065 787 L1260 850 M1185 825 L1175 897 M0 885 L60 885" stroke="#1c1c1c" stroke-width="1.3" vector-effect="non-scaling-stroke"/><path d="M15 398 L145 470 M900 650 L1090 715" stroke="#404040" stroke-width="0.9" stroke-dasharray="3 5" vector-effect="non-scaling-stroke"/></g>
<g transform="translate(723,330) scale(0.122609)" fill="none" stroke-linejoin="round"><path d="M215 0 L240 230 L280 897 M240 230 L280 230 L375 897 M375 210 L440 205 L805 165 L835 255 L805 270 L870 465 L590 522 Z M440 205 L590 522 M415 0 L440 205 M845 0 L805 165 M965 0 L1270 575 L1305 580 M1140 0 L1280 270 L1305 400 M310 585 L515 505 L480 525 L640 850 L370 897 M640 850 L750 897 M455 370 L500 350 M470 395 L515 375 M480 425 L525 400 M5 590 L45 897" stroke="#1c1c1c" stroke-width="1.3" vector-effect="non-scaling-stroke"/><path d="M5 305 L240 305 M5 715 L265 705 L330 725 M255 310 Q340 380 370 555 M1135 580 Q1210 680 1240 897 M745 795 Q750 860 735 885" stroke="#505050" stroke-width="0.9" vector-effect="non-scaling-stroke"/></g>
<g transform="translate(723,381) scale(0.191791)" fill="none" stroke-linejoin="round"><path d="M8 100 L88 897 M160 0 L215 897 M185 0 L200 105 L330 60 L320 0 M345 0 L380 68 L555 30 L548 0 M200 105 L240 300 L248 345 L240 370 L245 430 L258 672 L270 680 L270 805 L268 897 M310 75 L410 280 L525 325 L625 897 M240 300 L410 280 M245 430 L540 402 M258 672 L578 632 M268 805 L605 778 M760 0 L815 100 L870 450 M835 0 L850 100 M815 100 L1130 80 M1130 0 L1215 897 M870 450 L1165 440 M1175 475 L1267 470 M1210 765 L1267 760 M860 675 L1150 660 M860 660 L875 897 M655 680 L675 897 M675 790 L865 775 M680 830 L790 818 L800 897 M1010 897 L1215 875 M5 789 L52 784 L63 933 M240 370 L262 372 M640 315 L735 310 L735 430 L650 430 Z M640 315 L735 430 M735 310 L650 430 M738 275 L765 270 L770 290 L795 295 L795 395 L748 395 Z M745 290 L795 395 M795 295 L748 395 M730 400 L860 390 L860 465 L735 475 Z M730 400 L860 465 M860 390 L735 475 M735 475 L840 465 L850 560 L745 570 Z M735 475 L850 560 M840 465 L745 570 M645 580 L745 570 L750 680 L655 685 Z M645 580 L750 680 M745 570 L655 685 M745 570 L850 560 L860 675 L750 680 Z M745 570 L860 675 M850 560 L750 680 M840 415 L935 455 L945 670 L860 675 Z M840 415 L945 670 M935 455 L860 675" stroke="#1c1c1c" stroke-width="1.3" vector-effect="non-scaling-stroke"/><path d="M5 190 L160 185 L215 195 M5 460 L40 440 L190 440 L245 465 M5 745 L60 712 L200 715 L265 750 M725 105 Q790 200 795 300 M215 0 Q225 40 235 90 M5 480 L20 580 L5 585 M690 590 Q720 520 735 475" stroke="#505050" stroke-width="0.9" vector-effect="non-scaling-stroke"/><path d="M862 420 L868 640" stroke="#404040" stroke-width="0.9" stroke-dasharray="3 5" vector-effect="non-scaling-stroke"/></g>
<g transform="translate(965,381) scale(0.191791)" fill="none" stroke-linejoin="round"><path d="M55 0 L100 745 M175 0 L240 897 M880 0 L795 770 L780 897 M1005 0 L885 897 M1175 0 L1090 460 M950 415 L1260 520 M0 470 L85 465 M0 755 L140 748 L145 897 M530 775 L795 768 M530 775 L518 897" stroke="#1c1c1c" stroke-width="1.3" vector-effect="non-scaling-stroke"/><path d="M85 437 L205 430" stroke="#505050" stroke-width="0.9" vector-effect="non-scaling-stroke"/></g>
<g transform="translate(723,552) scale(0.191791)" fill="none" stroke-linejoin="round"><path d="M5 40 L60 32 L72 190 L22 200 L28 350 M88 0 L116 250 Q112 340 5 379 M5 542 Q95 540 112 615 L195 897 M5 620 Q70 640 105 700 L162 897 M215 0 L350 897 M265 0 L290 575 M625 0 L720 450 M270 95 L630 62 M275 218 L655 172 M285 455 L700 365 M760 155 L1010 140 M760 155 L820 235 L1225 205 M1015 10 L1015 220 M1225 10 L1225 205 M675 0 L675 45 L830 35 M870 20 L1015 10 M950 410 L1020 410 L1015 340 L1215 335 L1265 520 L1240 525 L1250 897 M950 410 L960 560 L1230 555 M960 560 L990 897 M980 680 L1080 672 L1082 710 L985 715 M990 810 L1240 795 M815 810 L855 897 M695 850 L710 897" stroke="#1c1c1c" stroke-width="1.3" vector-effect="non-scaling-stroke"/><path d="M100 80 L215 70 L270 95 M5 392 Q105 360 124 270 M100 345 L215 355 L275 380 M60 650 Q100 610 270 590 M160 870 L330 840 M910 235 Q960 280 965 410 M750 520 L950 508 M810 800 Q840 780 985 775" stroke="#505050" stroke-width="0.9" vector-effect="non-scaling-stroke"/><path d="M850 35 L1180 15" stroke="#404040" stroke-width="0.9" stroke-dasharray="3 5" vector-effect="non-scaling-stroke"/><path d="M290 570 L720 458 L800 800 L385 952 L290 570 Z" stroke="#000" stroke-width="3.6" vector-effect="non-scaling-stroke"/></g>
<g transform="translate(965,552) scale(0.191791)" fill="none" stroke-linejoin="round"><path d="M0 10 L140 5 L150 195 M150 315 L185 897 M240 0 L250 120 L325 185 L755 205 L780 0 M250 125 Q270 200 320 215 L740 232 Q760 225 760 205 M520 0 L500 195 M885 15 L1260 100 M900 210 L1260 262 M845 655 L1260 595 M915 25 L820 865 M890 15 L800 865 L1005 890 M290 420 Q295 395 330 395 L730 410 Q755 415 750 445 L700 897 M295 430 L725 445 L675 870 M295 430 L245 830 L675 870 M0 525 L180 522 M260 520 L285 515 M170 832 L245 830 L265 897 M335 845 L320 897" stroke="#1c1c1c" stroke-width="1.3" vector-effect="non-scaling-stroke"/><path d="M555 200 Q575 220 570 300 L565 430" stroke="#505050" stroke-width="0.9" vector-effect="non-scaling-stroke"/></g>
<g transform="translate(723,723) scale(0.191791)" fill="none" stroke-linejoin="round"><path d="M155 0 L240 280 L318 590 Q318 640 270 645 M195 0 L265 260 L290 595 M5 120 L165 70 M5 120 L125 610 L5 660 M5 345 L230 285 M100 465 L270 440 M125 465 L145 612 L290 598 M350 0 L490 680 Q500 710 540 715 L1267 765 M390 60 L575 665 Q590 695 640 700 L855 718 M290 420 L435 400 L470 405 L865 325 M505 492 L615 460 L618 470 L870 435 M555 630 L650 605 L655 618 L860 618 M705 0 L765 175 L780 340 M690 215 L765 205 M690 215 L725 350 M860 0 Q880 50 900 150 L830 155 L860 325 L870 440 L855 718 M995 0 L1000 110 L1030 680 M1000 110 L1255 95 L1255 0 M1235 100 L1240 315 L1267 315 M1025 520 L1267 520 M860 575 L925 585 L915 720 M865 600 L920 605 M865 625 L920 630 M865 650 L918 655 M910 670 L1100 690 L1105 745 M930 675 L925 735 M955 678 L950 738 M980 680 L975 740 M1005 683 L1000 742 M1030 686 L1025 744 M1055 688 L1050 746 M1080 690 L1075 748 M535 890 Q535 825 570 825 L1225 850 Q1235 860 1235 890 M560 890 L565 845 L1210 870 L1215 890 M835 855 L840 890 M5 865 Q200 810 340 805 Q370 815 375 890 M5 890 L325 845 L330 890" stroke="#1c1c1c" stroke-width="1.3" vector-effect="non-scaling-stroke"/><path d="M215 190 Q225 175 245 175 L380 170 L415 185 M865 15 L995 15 M900 118 L995 115 M845 230 L1000 235 M875 460 L1010 455 M5 705 Q150 660 300 645 L540 630 M220 605 Q240 640 270 645 M660 710 L660 840 M915 720 L925 850 M1090 745 L1095 835 L1080 860" stroke="#505050" stroke-width="0.9" vector-effect="non-scaling-stroke"/></g>
<g transform="translate(965,723) scale(0.191791)" fill="none" stroke-linejoin="round"><path d="M50 55 L180 45 L185 80 L50 90 Z M0 95 L100 92 L100 130 L30 140 L30 180 L45 310 L0 315 M180 0 L180 45 M265 0 L295 110 L430 125 L445 10 L680 25 Q700 20 700 0 M800 0 Q810 35 855 40 L850 210 L1000 228 L1010 0 M1000 240 L1260 250 M1000 228 L985 780 M0 315 L85 310 L95 415 L35 430 L35 520 L0 520 M0 520 L105 520 L128 745 M125 285 L240 290 L235 515 L135 510 Z M150 540 L415 548 L410 668 L152 660 Z M795 570 L935 580 L930 720 L790 710 Z M0 745 L500 745 L1260 795 M0 765 L1260 810 M80 880 Q90 860 110 860 L910 887" stroke="#1c1c1c" stroke-width="1.3" vector-effect="non-scaling-stroke"/><path d="M320 0 Q310 40 260 70 Q200 110 85 300 M70 750 L70 880 M295 745 Q315 760 315 897 M480 745 Q500 770 505 897 M575 755 Q610 770 605 897 M785 765 L785 897 M990 780 L995 897 M1175 795 L1180 897" stroke="#505050" stroke-width="0.9" vector-effect="non-scaling-stroke"/></g>
<g font-size="14" fill="#a27c5c"><text x="1095.4" y="223.4" textLength="20.2" lengthAdjust="spacingAndGlyphs">94.0</text><text x="1196" y="228.2" textLength="14.0" lengthAdjust="spacingAndGlyphs">97</text><text x="969.8" y="250.3" textLength="20.2" lengthAdjust="spacingAndGlyphs">78.2</text><text x="794" y="312.6" textLength="19.1" lengthAdjust="spacingAndGlyphs">93.1</text><text x="895.6" y="349.6" textLength="21.1" lengthAdjust="spacingAndGlyphs">98.5</text><text x="959" y="361.5" textLength="20.5" lengthAdjust="spacingAndGlyphs">78.2</text><text x="1058" y="351.9" textLength="20.2" lengthAdjust="spacingAndGlyphs">94.0</text><text x="939.7" y="434.7" textLength="21.1" lengthAdjust="spacingAndGlyphs">87.9</text><text x="829.4" y="456.8" textLength="21.1" lengthAdjust="spacingAndGlyphs">76.7</text><text x="792" y="474" textLength="20.2" lengthAdjust="spacingAndGlyphs">83.6</text><text x="799.7" y="495.1" textLength="21.1" lengthAdjust="spacingAndGlyphs">82.9</text><text x="951.2" y="495" textLength="20.8" lengthAdjust="spacingAndGlyphs">86.5</text><text x="1054.2" y="468.3" textLength="20.1" lengthAdjust="spacingAndGlyphs">90.6</text><text x="1124.2" y="491.3" textLength="20.1" lengthAdjust="spacingAndGlyphs">78.8</text><text x="1177" y="517.2" textLength="20.0" lengthAdjust="spacingAndGlyphs">85.7</text><text x="810.3" y="518.1" textLength="20.1" lengthAdjust="spacingAndGlyphs">79.2</text><text x="853.4" y="511.4" textLength="20.2" lengthAdjust="spacingAndGlyphs">80.6</text><text x="942.6" y="514.3" textLength="21.1" lengthAdjust="spacingAndGlyphs">85.3</text><text x="906.2" y="533.5" textLength="20.1" lengthAdjust="spacingAndGlyphs">84.2</text><text x="806.4" y="553" textLength="20.2" lengthAdjust="spacingAndGlyphs">82.3</text><text x="858" y="559.7" textLength="20.0" lengthAdjust="spacingAndGlyphs">80.2</text><text x="1127.2" y="545.2" textLength="20.0" lengthAdjust="spacingAndGlyphs">83.8</text><text x="1077.5" y="560" textLength="20.5" lengthAdjust="spacingAndGlyphs">85.7</text><text x="942.6" y="566.4" textLength="20.1" lengthAdjust="spacingAndGlyphs">81.9</text><text x="805.5" y="578.9" textLength="20.1" lengthAdjust="spacingAndGlyphs">81.5</text><text x="1167.3" y="580.8" textLength="21.1" lengthAdjust="spacingAndGlyphs">89.8</text><text x="993.8" y="605.7" textLength="20.1" lengthAdjust="spacingAndGlyphs">77.4</text><text x="805.9" y="613.4" textLength="20.7" lengthAdjust="spacingAndGlyphs">83.8</text><text x="866.8" y="617.2" textLength="21.2" lengthAdjust="spacingAndGlyphs">76.5</text><text x="807.4" y="641.2" textLength="21.1" lengthAdjust="spacingAndGlyphs">80.9</text><text x="922.5" y="644" textLength="20.1" lengthAdjust="spacingAndGlyphs">85.1</text><text x="1158.7" y="637.3" textLength="21.1" lengthAdjust="spacingAndGlyphs">89.2</text><text x="1054.2" y="679.5" textLength="20.1" lengthAdjust="spacingAndGlyphs">91.1</text><text x="974.6" y="696.8" textLength="21.1" lengthAdjust="spacingAndGlyphs">85.4</text><text x="929.2" y="723.7" textLength="20.1" lengthAdjust="spacingAndGlyphs">84.6</text><text x="826.6" y="740.3" textLength="21.1" lengthAdjust="spacingAndGlyphs">80.4</text><text x="927.3" y="758.5" textLength="21.1" lengthAdjust="spacingAndGlyphs">84.0</text><text x="820.8" y="777.7" textLength="21.1" lengthAdjust="spacingAndGlyphs">76.4</text><text x="724" y="788.2" textLength="21.0" lengthAdjust="spacingAndGlyphs">74.0</text><text x="1082" y="788.2" textLength="20.7" lengthAdjust="spacingAndGlyphs">78.2</text><text x="843.8" y="801.6" textLength="21.1" lengthAdjust="spacingAndGlyphs">78.4</text><text x="1168.3" y="820.8" textLength="21.1" lengthAdjust="spacingAndGlyphs">91.7</text><text x="838" y="835.2" textLength="20.2" lengthAdjust="spacingAndGlyphs">76.4</text><text x="852.5" y="845.7" textLength="20.1" lengthAdjust="spacingAndGlyphs">74.8</text><text x="948.4" y="857.3" textLength="20.6" lengthAdjust="spacingAndGlyphs">75.1</text><text x="790.1" y="865.9" textLength="20.2" lengthAdjust="spacingAndGlyphs">63.9</text><text x="1033" y="895" textLength="20.0" lengthAdjust="spacingAndGlyphs">74.0</text></g>
<g font-size="15" fill="#262626"><text x="1055" y="616.2" textLength="17.5" lengthAdjust="spacingAndGlyphs">do</text><text transform="translate(996.2,521.5) rotate(90)" textLength="37" lengthAdjust="spacingAndGlyphs">Pátio</text><text transform="translate(1128.8,564.5) rotate(-90)" textLength="38" lengthAdjust="spacingAndGlyphs">Tijolo</text><text transform="translate(875.3,622) rotate(74.2)" text-anchor="middle" y="5" textLength="30" lengthAdjust="spacingAndGlyphs">Alto</text><text transform="translate(885.7,655.8) rotate(74.2)" text-anchor="middle" y="5" textLength="18" lengthAdjust="spacingAndGlyphs">do</text><text transform="translate(896.3,696.1) rotate(74.2)" text-anchor="middle" y="5" textLength="45" lengthAdjust="spacingAndGlyphs">Longo</text><text transform="translate(1077.2,887.6) rotate(3)" textLength="19" lengthAdjust="spacingAndGlyphs">Tv.</text><text transform="translate(1118.4,888.3) rotate(3)" textLength="47" lengthAdjust="spacingAndGlyphs">Conde</text><text transform="translate(1186.5,891) rotate(3)" textLength="18.5" lengthAdjust="spacingAndGlyphs">de</text></g></g>
<rect x="723.2" y="211" width="484.4" height="683.8" fill="none" stroke="#14e43c" stroke-width="1.9"/>
<rect x="1837" y="207" width="15" height="7" fill="#3a3e48"/><rect x="1838.2" y="208.8" width="12.6" height="3.2" fill="#ececec"/>
<rect x="1864" y="199.8" width="13" height="12.2" fill="#3a3e48"/><rect x="1865.2" y="201" width="10.6" height="9.8" fill="#ececec"/>
<rect x="1862" y="202" width="11.6" height="12.5" fill="#3a3e48"/><rect x="1863.2" y="203.2" width="9.2" height="10.1" fill="#ececec"/><rect x="1866.2" y="206" width="4.8" height="5" fill="#3a3e48"/><rect x="1867.2" y="207" width="2.8" height="3" fill="#7a7a7a"/>
<path d="M1888.5 202.5 L1899.5 212.5 M1899.5 202.5 L1888.5 212.5" stroke="#3a3a40" stroke-width="4.6"/><path d="M1888.8 202.8 L1899.2 212.2 M1899.2 202.8 L1888.8 212.2" stroke="#f4f4f4" stroke-width="2.6"/>
<rect x="1868.5" y="475" width="40" height="161.5" rx="4" fill="#949494" stroke="#707070" stroke-width="1.3"/>
<g stroke="#b4b4b4" fill="none" stroke-width="1.4" opacity="0.9"><circle cx="1902" cy="482" r="3.5"/><path d="M1899.5 479.5 L1904.5 484.5 M1904.5 479.5 L1899.5 484.5"/><path d="M1871 488.5 L1906 488.5"/><path d="M1875 510 Q1875 500 1885 500 L1894 500 Q1897 500 1897 504 L1897 512"/><circle cx="1885" cy="510" r="5"/><path d="M1872 532.5 L1906 532.5"/><path d="M1876 555 Q1880 562 1886 565 Q1893 565 1895 555 L1896 545 M1888 556 L1888 541 M1891 556 L1891 540 M1894 557 L1894 544 M1885 557 L1885 543"/><path d="M1875 574 L1893 592 M1893 574 L1875 592"/><circle cx="1891" cy="590" r="5"/><path d="M1894.5 594 L1899 599"/><circle cx="1902" cy="629" r="3.5"/></g>
<text x="1889" y="522" font-size="9" font-weight="bold" fill="#9aaec8" opacity="0.7">2D</text>
<path d="M1887.0 608.5 L1892.0 608.5 L1889.5 611.5 Z" fill="#a8a8a8"/>
<g stroke="#1f4dff" stroke-width="1.6" fill="none"><path d="M21.5 810 L21.5 897 M21.5 810 L72 897"/><path d="M23.3 839 L30.4 846 L37.6 839 M30.4 846 L30.4 854"/></g>
</svg>
</body></html>
